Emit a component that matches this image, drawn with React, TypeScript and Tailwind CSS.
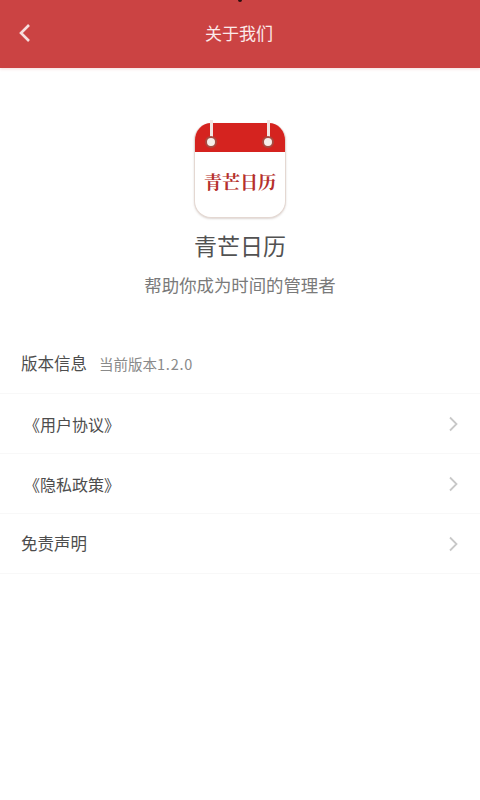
const cjk = "font-['Noto_Sans_CJK_SC','Noto_Sans',sans-serif]";

function Chevron() {
  return (
    <svg width="12" height="16" viewBox="0 0 12 16" fill="none" stroke="#c8c8c8" strokeWidth="1.8">
      <path d="M3 1.5 L9.5 8 L3 14.5" />
    </svg>
  );
}

function Ring({ left }: { left: string }) {
  return (
    <div className={`absolute top-0 w-[12px] h-[28px] flex flex-col items-center ${left}`}>
      <div className="w-[3px] h-[18px] bg-[#f3e6e2]" />
      <div className="-mt-[2px] w-[12px] h-[12px] rounded-full bg-[#f6eeea] border-2 border-[#a84a40]" />
    </div>
  );
}

function AppIcon() {
  return (
    <div className="relative w-[92px] h-[98px]">
      <div className="absolute left-0 right-0 bottom-0 top-[3px] rounded-[17px] overflow-hidden border border-[#e4d8d2] border-t-0 bg-white flex flex-col shadow-[0_1px_2px_rgba(120,90,80,0.25)]">
        <div className="h-[29px] bg-[#d5231f]" />
        <div className="flex-1 flex items-center justify-center pb-[7px]">
          <span className="font-['Noto_Serif_CJK_SC','Noto_Sans_CJK_SC',serif] font-bold text-[18px] leading-none text-[#b5302c]">
            青芒日历
          </span>
        </div>
      </div>
      <Ring left="left-[11px]" />
      <Ring left="left-[68px]" />
    </div>
  );
}

function Row({ title, extra, version, arrow, bracket }: { title: string; extra?: string; version?: string; arrow?: boolean; bracket?: boolean }) {
  return (
    <div className="h-[60px] flex items-center justify-between pl-[21px] pr-[21px] border-b border-[#f8f8f8]">
      <div className="flex items-center gap-[12px]">
        <span className={bracket ? "ml-[3px] text-[16px] text-[#4d4d4d]" : "text-[16.5px] text-[#4d4d4d]"}>{title}</span>
        {extra && (
          <span className="text-[14.5px] text-[#8a8a8a]">
            {extra}
            <span className="tracking-[0.8px]">{version}</span>
          </span>
        )}
      </div>
      {arrow && <Chevron />}
    </div>
  );
}

export default function App() {
  return (
    <div className={`w-[480px] h-[800px] bg-white overflow-hidden ${cjk}`}>
      <header className="relative h-[68px] bg-[#cb4343] flex items-center justify-center pb-[2px] pr-[2px] shadow-[0_1px_3px_rgba(200,80,80,0.2)]">
        <div className="absolute left-[238px] -top-[2px] w-[4px] h-[4px] rounded-full bg-[#2a0f0f]" />
        <svg className="absolute left-[18px] top-[23px]" width="14" height="20" viewBox="0 0 14 20" fill="none" stroke="#f6dede" strokeWidth="2.6">
          <path d="M11 2 L3 10 L11 18" />
        </svg>
        <span className="text-[17px] text-[#fbeaea]">关于我们</span>
      </header>
      <section className="flex flex-col items-center pt-[52px]">
        <AppIcon />
        <h1 className="mt-[10px] text-[23px] leading-[34px] font-normal text-[#525252]">青芒日历</h1>
        <p className="mt-[11px] text-[17.4px] leading-[24px] text-[#7a7a7a]">帮助你成为时间的管理者</p>
      </section>
      <section className="mt-[37px]">
        <Row title="版本信息" extra="当前版本" version="1.2.0" />
        <Row title="《用户协议》" arrow bracket />
        <Row title="《隐私政策》" arrow bracket />
        <Row title="免责声明" arrow />
      </section>
    </div>
  );
}
